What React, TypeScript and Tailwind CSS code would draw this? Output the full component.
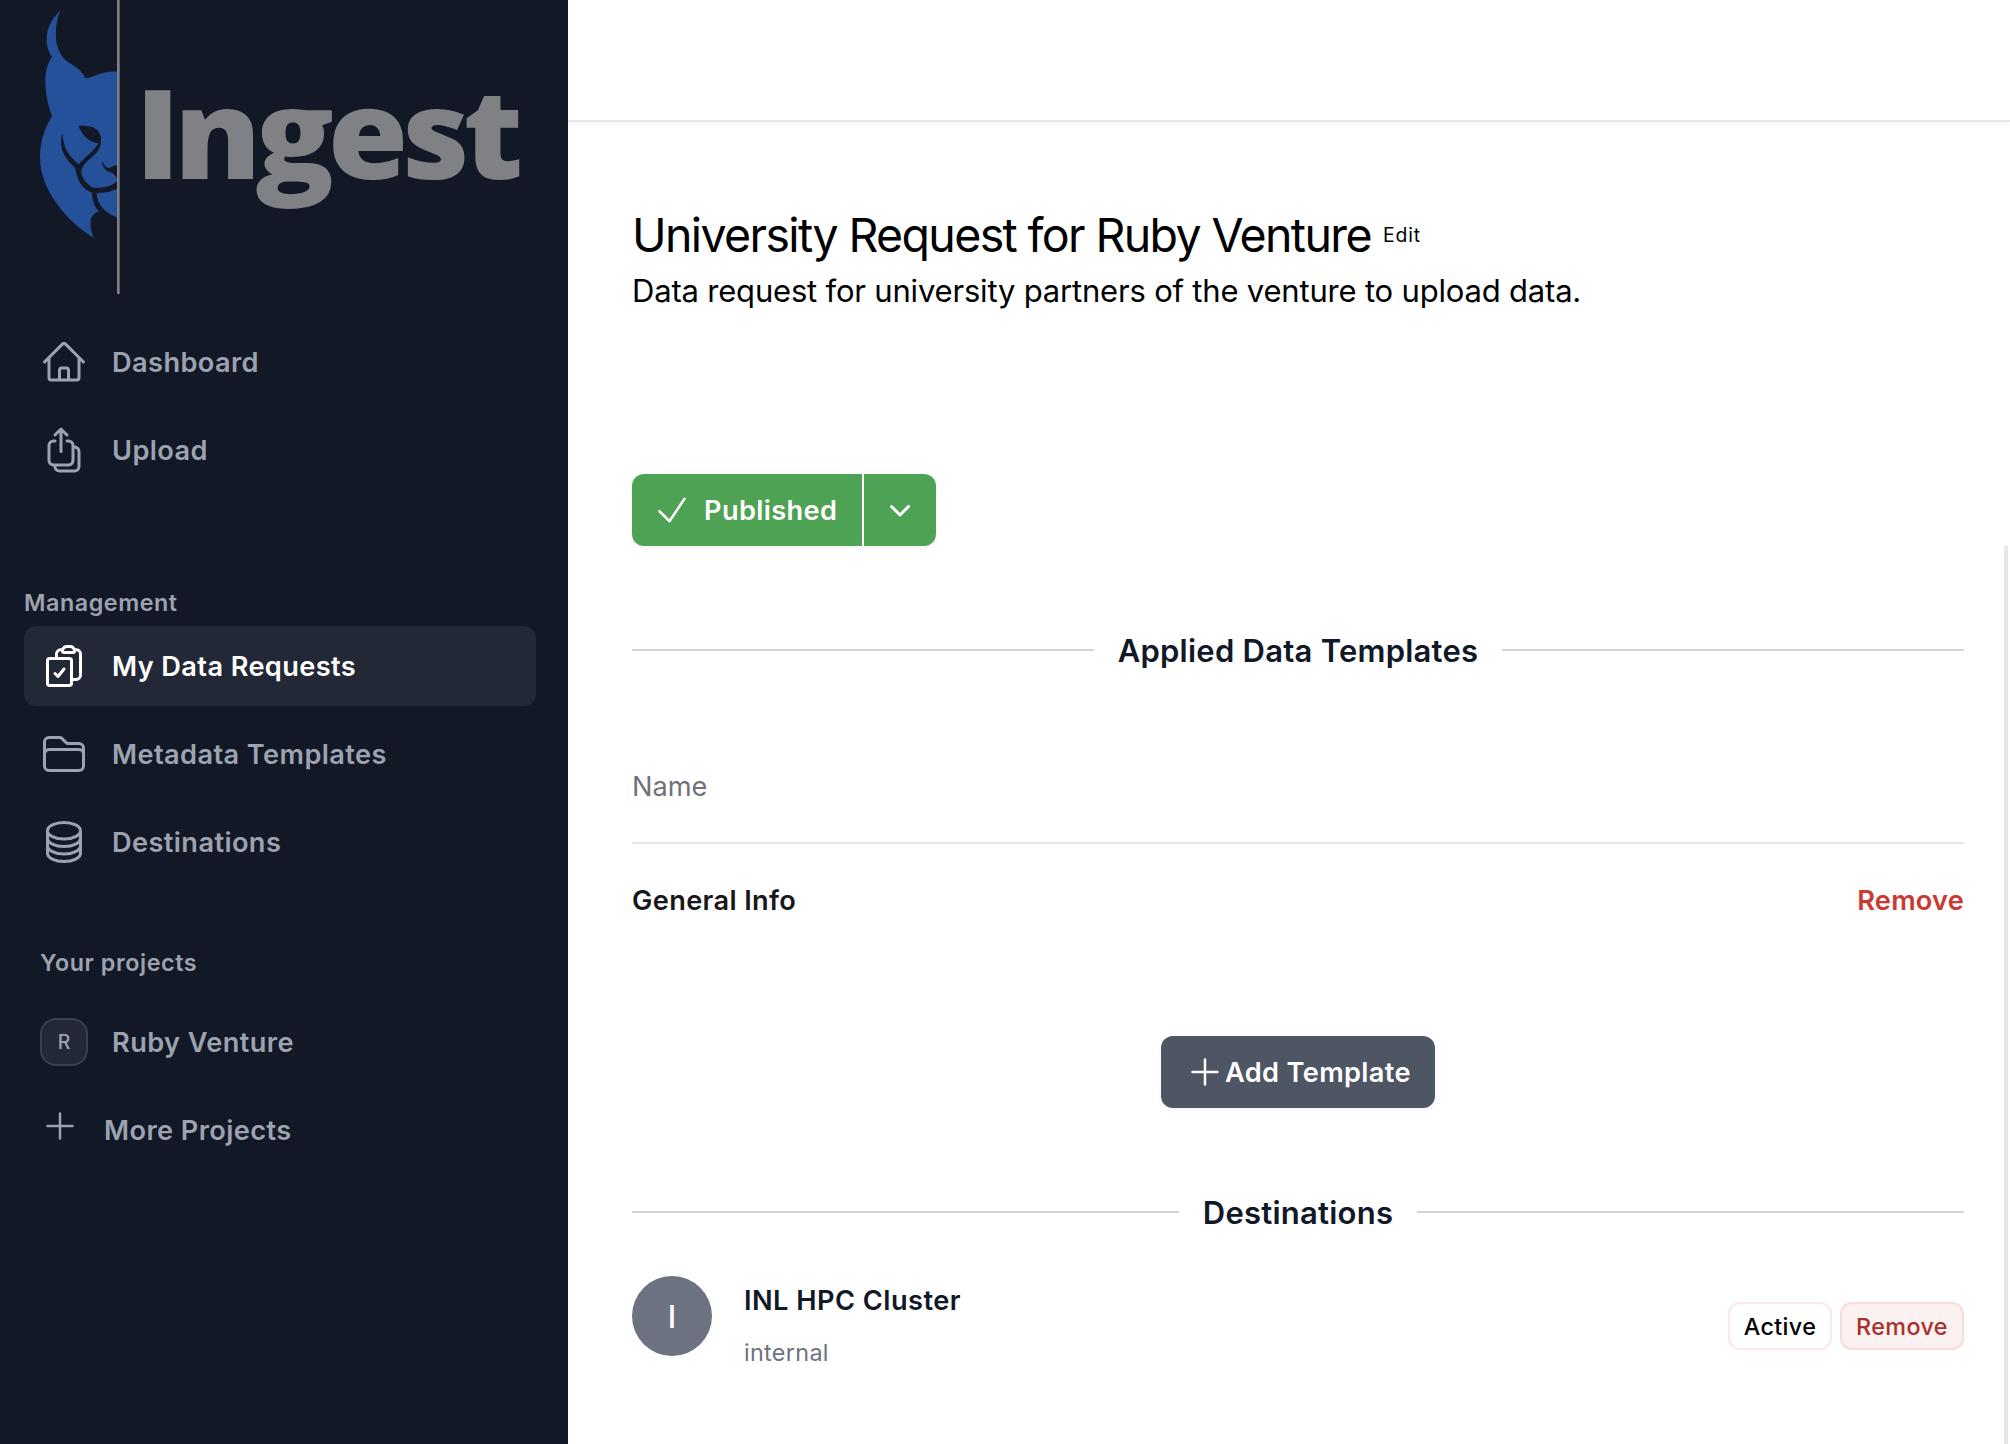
import type { ReactNode } from 'react';
import {
  HiOutlineHome,
  HiOutlineArrowUpOnSquareStack,
  HiOutlineClipboardDocumentCheck,
  HiOutlineFolder,
  HiOutlineCircleStack,
  HiOutlineCheck,
  HiOutlinePlus,
  HiMiniChevronDown,
} from 'react-icons/hi2';

function Logo() {
  return (
    <svg className="block h-[294px] w-[568px] overflow-visible" viewBox="0 0 1704 882">
      <path
        fill="#25519a"
        d="M182 31C150 60 138 95 140 125C141 145 148 160 156 170C142 190 136 215 136 245C136 280 144 315 156 348C134 385 120 425 120 470C120 530 145 580 185 630C215 667 250 695 281 713C273 695 270 675 272 660C275 647 283 640 296 633C282 618 276 600 276 578C245 567 232 540 225 503C200 480 183 455 183 428C183 415 185 405 188 399C188 440 207 470 236 493C250 475 275 460 292 436L295 430C265 425 245 405 236 378C275 374 303 385 303 420C303 450 285 465 262 483C250 495 244 505 244 518C246 535 262 552 278 563C310 564 335 560 352 543L352 537C347 525 335 516 322 514C310 505 305 495 307 482C312 495 318 503 329 504C336 499 343 497 352 496L352 215C330 213 310 217 290 225C278 230 265 236 256 234C245 210 225 200 205 187C185 175 175 150 170 130C165 100 168 60 182 31Z"
      />
      <path fill="#25519a" d="M290 579C315 579 335 574 352 566L352 653C318 640 290 615 290 579Z" />
      <rect x="351" y="0" width="8" height="882" fill="#808184" />
      <text
        x="405"
        y="537"
        textLength="1146"
        lengthAdjust="spacingAndGlyphs"
        fill="#808184"
        className="font-['Open_Sans',sans-serif] text-[374px] font-extrabold tracking-[-18px]"
      >
        Ingest
      </text>
    </svg>
  );
}

function NavItem({ icon, label, active }: { icon: ReactNode; label: string; active?: boolean }) {
  return (
    <a
      className={
        active
          ? 'flex h-20 items-start gap-6 rounded-xl bg-[#222835] p-4 text-[27.2px] leading-[48px] font-semibold tracking-[0.38px] text-white'
          : 'flex h-20 items-start gap-6 rounded-xl p-4 text-[27.2px] leading-[48px] font-semibold tracking-[0.4px] text-[#9ca3af]'
      }
    >
      {icon}
      <span className="pt-px">{label}</span>
    </a>
  );
}

function Divider({ children }: { children: ReactNode }) {
  return (
    <div className="flex items-center">
      <div className="h-0.5 flex-1 bg-[#d1d5db]" />
      <h2 className="px-6 pt-px text-[31px] leading-[47px] font-semibold tracking-[0.24px] text-[#111827]">
        {children}
      </h2>
      <div className="h-0.5 flex-1 bg-[#d1d5db]" />
    </div>
  );
}

export default function App() {
  return (
    <div className="flex h-[1444px] w-[2010px] overflow-hidden bg-white font-['Inter',sans-serif]">
      <aside className="w-[568px] shrink-0 bg-[#121826]">
        <Logo />
        <nav className="mt-7 ml-6 flex w-[512px] flex-col gap-2">
          <NavItem icon={<HiOutlineHome className="size-12" />} label="Dashboard" />
          <NavItem icon={<HiOutlineArrowUpOnSquareStack className="size-12" />} label="Upload" />
        </nav>
        <div className="mt-[90px] ml-6 text-[23.3px] leading-[46px] font-semibold tracking-[0.55px] text-[#9ca3af]">
          Management
        </div>
        <nav className="ml-6 flex w-[512px] flex-col gap-2">
          <NavItem active icon={<HiOutlineClipboardDocumentCheck className="size-12" />} label="My Data Requests" />
          <NavItem icon={<HiOutlineFolder className="size-12" />} label="Metadata Templates" />
          <NavItem icon={<HiOutlineCircleStack className="size-12" />} label="Destinations" />
        </nav>
        <div className="mt-[58px] ml-10 text-[23.3px] leading-[46px] font-semibold tracking-[0.58px] text-[#9ca3af]">
          Your projects
        </div>
        <nav className="mt-4 ml-6 flex w-[512px] flex-col gap-2">
          <NavItem
            icon={
              <span className="flex size-12 items-center justify-center rounded-2xl border-2 border-[#374151] bg-[#222835] text-[19.4px] font-medium tracking-normal">
                R
              </span>
            }
            label="Ruby Venture"
          />
          <NavItem icon={<HiOutlinePlus className="size-10" />} label="More Projects" />
        </nav>
      </aside>

      <main className="flex-1">
        <header className="h-[122px] border-b-2 border-[#e5e7eb] shadow-[0_2px_4px_rgba(0,0,0,0.03)]" />
        <div className="flex justify-between">
          <div className="ml-16 w-[1332px]">
            <div className="mt-[81px] flex items-center text-black">
              <h1 className="text-[46.5px] leading-[64px] tracking-[-1.63px] whitespace-nowrap">
                University Request for Ruby Venture
              </h1>
              <a className="ml-3 pt-0.5 text-[19.4px] tracking-[0.9px]">Edit</a>
            </div>
            <p className="text-[31px] leading-[48px] tracking-[-0.19px] whitespace-nowrap text-black">
              Data request for university partners of the venture to upload data.
            </p>

            <div className="mt-[159px] flex h-[72px] w-[304px] rounded-xl text-white shadow-[0_2px_4px_rgba(0,0,0,0.05)]">
              <button className="flex w-[230px] items-center gap-3 rounded-l-xl bg-[#4da254] pl-5 text-[27.2px] font-semibold tracking-[0.36px]">
                <HiOutlineCheck className="size-10" />
                <span className="pt-0.5">Published</span>
              </button>
              <button className="ml-0.5 flex w-[72px] items-center justify-center rounded-r-xl bg-[#4da254] pb-0.5">
                <HiMiniChevronDown className="size-10" />
              </button>
            </div>

            <div className="mt-20">
              <Divider>Applied Data Templates</Divider>
            </div>

            <div className="mt-[89px] border-b-2 border-[#e5e5e5] pb-[31px] text-[27.2px] leading-[48px] text-[#71717a]">
              Name
            </div>
            <div className="flex h-28 items-center justify-between pt-0.5 text-[27.2px] font-semibold">
              <span className="tracking-[0.36px] text-[#18181b]">General Info</span>
              <a className="tracking-[0.2px] text-[#cb3a31]">Remove</a>
            </div>

            <div className="mt-20 flex justify-center">
              <button className="flex h-[72px] w-[274px] items-center rounded-xl bg-[#4e5563] pl-6 text-[27.2px] font-semibold tracking-[0.36px] whitespace-nowrap text-white shadow-[0_2px_4px_rgba(0,0,0,0.05)]">
                <HiOutlinePlus className="size-10" />
                <span className="pt-0.5">Add Template</span>
              </button>
            </div>

            <div className="mt-20">
              <Divider>Destinations</Divider>
            </div>

            <div className="mt-10 flex items-start">
              <div className="flex size-20 items-center justify-center rounded-full bg-[#6d7280] pt-0.5 text-[31px] font-medium text-white">
                I
              </div>
              <div className="ml-8">
                <div className="pt-px text-[27.2px] leading-[48px] font-semibold tracking-[0.47px] text-[#111827]">
                  INL HPC Cluster
                </div>
                <div className="mt-1 text-[23.3px] leading-[48px] tracking-[0.35px] text-[#6b7280]">internal</div>
              </div>
              <div className="mt-[26px] ml-auto flex gap-2 text-[23.3px] font-medium tracking-[0.4px]">
                <button className="flex h-12 w-[104px] items-center justify-center rounded-xl border-2 border-[#fce8e8] pt-0.5 text-black">
                  Active
                </button>
                <button className="flex h-12 w-[124px] items-center justify-center rounded-xl border-2 border-[#f8dcdb] bg-[#fcf1f1] pt-0.5 text-[#a9302a]">
                  Remove
                </button>
              </div>
            </div>
          </div>
          <div className="mt-[424px] mr-0.5 h-[898px] w-1 bg-[#e5e7eb]" />
        </div>
      </main>
    </div>
  );
}
